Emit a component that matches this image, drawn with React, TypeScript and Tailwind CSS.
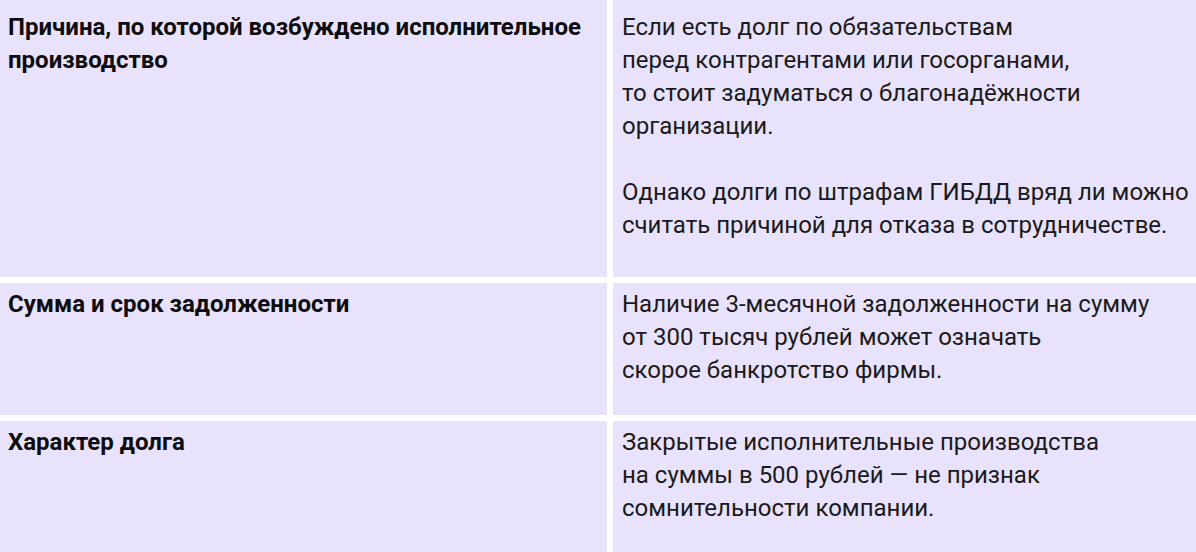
const rows = [
  {
    title: 'Причина, по которой возбуждено исполнительное производство',
    pad: 'pt-[11px] h-[277px]',
    paragraphs: [
      [
        'Если есть долг по обязательствам',
        'перед контрагентами или госорганами,',
        'то стоит задуматься о благонадёжности',
        'организации.',
      ],
      ['Однако долги по штрафам ГИБДД вряд ли можно', 'считать причиной для отказа в сотрудничестве.'],
    ],
  },
  {
    title: 'Сумма и срок задолженности',
    pad: 'pt-[5px] h-[132px]',
    paragraphs: [
      ['Наличие 3-месячной задолженности на сумму', 'от 300 тысяч рублей может означать', 'скорое банкротство фирмы.'],
    ],
  },
  {
    title: 'Характер долга',
    pad: 'pt-[5px] h-[140px]',
    paragraphs: [
      ['Закрытые исполнительные производства', 'на суммы в 500 рублей — не признак', 'сомнительности компании.'],
    ],
  },
];

export default function App() {
  return (
    <div className="h-[552px] w-full overflow-hidden bg-white font-['Roboto',sans-serif] text-[24px] leading-[33px] text-[#1a1a1a]">
      <div className="grid grid-cols-[607px_1fr] gap-[6px]">
        {rows.map((row) => (
          <div key={row.title} className="contents">
            <div className={`bg-[#e9e2fc] px-2 font-bold text-[#0d0d0d] ${row.pad}`}>{row.title}</div>
            <div className={`flex flex-col gap-[33px] whitespace-nowrap bg-[#e9e2fc] pl-[9px] ${row.pad}`}>
              {row.paragraphs.map((lines, i) => (
                <p key={i}>
                  {lines.map((line, j) => (
                    <span key={j}>
                      {line}
                      {j < lines.length - 1 && <br />}
                    </span>
                  ))}
                </p>
              ))}
            </div>
          </div>
        ))}
      </div>
    </div>
  );
}
